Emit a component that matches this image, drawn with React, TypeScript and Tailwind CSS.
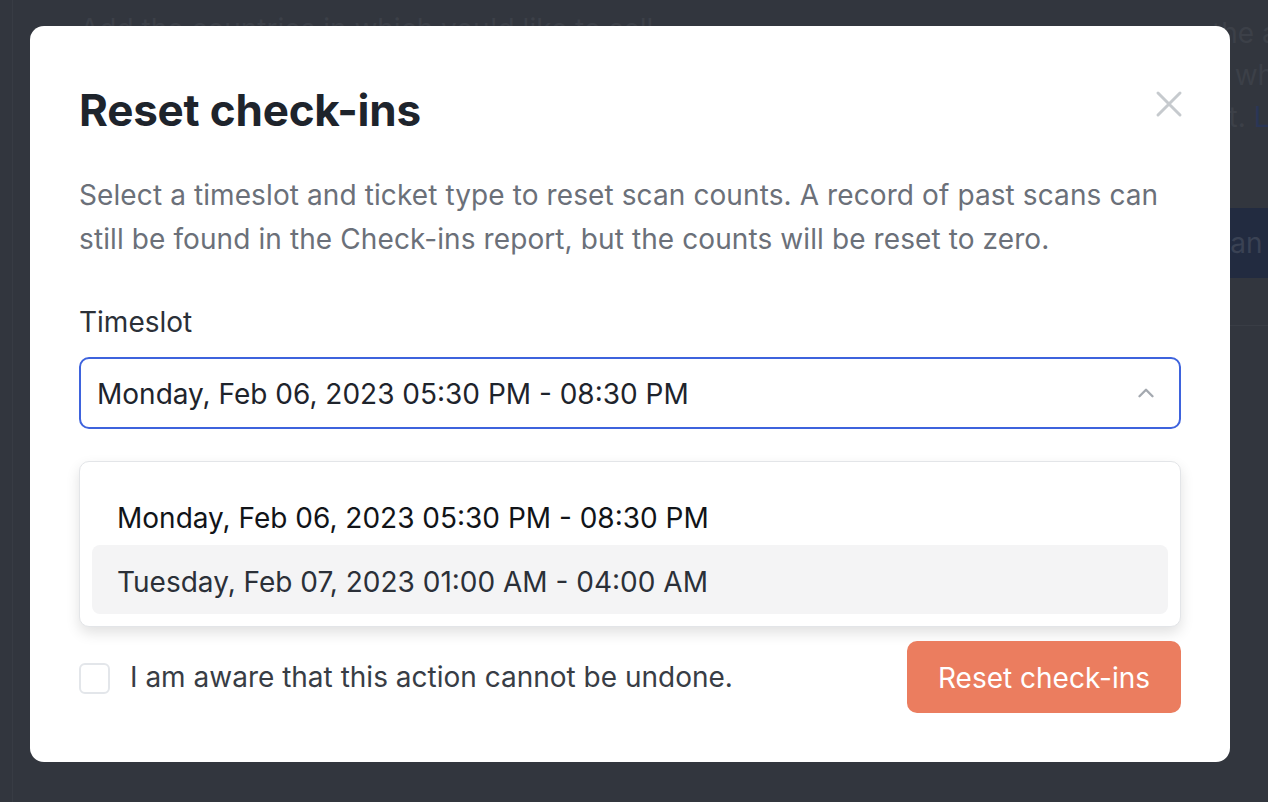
import { ChevronUp } from 'lucide-react';

const slots = [
  'Monday, Feb 06, 2023 05:30 PM - 08:30 PM',
  'Tuesday, Feb 07, 2023 01:00 AM - 04:00 AM',
];

function Backdrop() {
  return (
    <div className="absolute inset-0 bg-[#32363e]">
      <div className="absolute left-[12px] top-0 bottom-0 w-px bg-[#383c44]" />
      <p className="absolute left-[80px] top-[8px] text-[28px] text-[#3c4048]">
        Add the countries in which you'd like to sell
      </p>
      <div className="absolute left-[1212px] top-[12px] w-[400px] text-[28px] leading-[42px] text-[#3c4048]">
        <p>the a</p>
        <p>s wh</p>
        <p>
          nt. <span className="text-[#2a3656]">Le</span>
        </p>
      </div>
      <div className="absolute left-[1150px] top-[208px] h-[70px] w-[200px] bg-[#222b40] pl-[46px] text-[28px] leading-[70px] text-[#3a4254]">
        Scan
      </div>
      <div className="absolute left-[1230px] right-0 top-[325px] h-px bg-[#393d45]" />
    </div>
  );
}

export default function App() {
  return (
    <div className="relative h-[802px] w-full overflow-hidden font-['Inter',sans-serif]">
      <Backdrop />
      <div className="absolute left-[30px] top-[26px] w-[1200px] h-[736px] rounded-[14px] bg-white px-[49px] pt-[52px]">
        <div className="flex items-start justify-between">
          <h1 className="text-[44px] font-bold leading-[64px] tracking-[-0.2px] text-[#1e242c]">Reset check-ins</h1>
          <button className="mt-[12px] mr-[-2px]">
            <svg width="28" height="28" viewBox="0 0 28 28" fill="none" stroke="#c6cace" strokeWidth="3" strokeLinecap="round">
              <path d="M3 3L25 25M25 3L3 25" />
            </svg>
          </button>
        </div>
        <p className="mt-[31px] text-[28px] leading-[44px] tracking-[0.1px] text-[#6b7079]">
          Select a timeslot and ticket type to reset scan counts. A record of past scans can still be found in the Check-ins report, but the counts will be reset to zero.
        </p>
        <label className="mt-[43px] block text-[28px] leading-[36px] text-[#2b3038]">Timeslot</label>
        <div className="mt-[17px] flex h-[72px] items-center justify-between rounded-[10px] border-2 border-[#3e63dd] pl-[16px] pr-[20px]">
          <span className="pt-[2px] text-[28px] text-[#1e242c]">{slots[0]}</span>
          <ChevronUp size={26} strokeWidth={2.2} className="text-[#a4a9b0]" />
        </div>
        <div className="mt-[32px] rounded-[10px] border border-[#e3e5e8] bg-white px-[12px] pt-[14px] pb-[12px] shadow-[0_6px_14px_rgba(0,0,0,0.12)]">
          {slots.map((s, i) => (
            <div
              key={s}
              className={`flex h-[69px] items-center rounded-[8px] px-[25px] text-[28px] ${
                i === 1 ? 'bg-[#f4f4f5] pt-[4px] text-[#2b3038]' : 'pt-[14px] text-[#111418]'
              }`}
            >
              {s}
            </div>
          ))}
        </div>
        <div className="mt-[14px] flex items-center justify-between">
          <label className="flex items-center gap-[20px]">
            <span className="mt-[2px] h-[31px] w-[31px] rounded-[6px] border-2 border-[#e3e6ea]" />
            <span className="text-[28px] text-[#383d45]">I am aware that this action cannot be undone.</span>
          </label>
          <button className="h-[72px] w-[274px] rounded-[10px] bg-[#eb7d5f] pt-[2px] text-[28px] text-white">
            Reset check-ins
          </button>
        </div>
      </div>
    </div>
  );
}
